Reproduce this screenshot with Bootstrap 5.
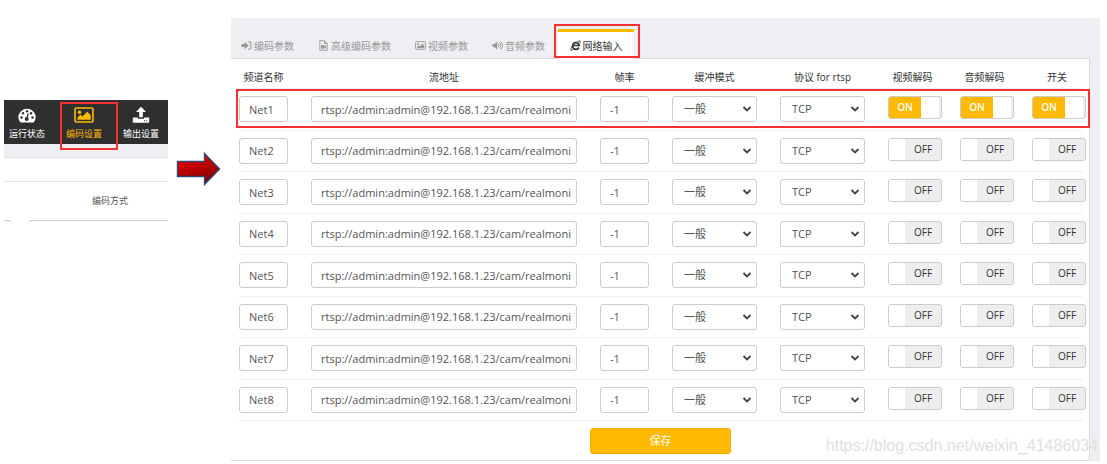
<!DOCTYPE html>
<html lang="zh-CN">
<head>
<meta charset="utf-8">
<meta name="viewport" content="width=device-width, initial-scale=1">
<title>编码设置 - 网络输入</title>
<link href="https://cdn.jsdelivr.net/npm/bootstrap@5.3.0/dist/css/bootstrap.min.css" rel="stylesheet">
<style>
:root { --amber: #ffb900; --mist: #eeeef3; --mark: #f73131; }
body { font-family: "Open Sans", "Noto Sans CJK SC", sans-serif; font-size: 11px; line-height: 16px; color: #555; background: #fff; }

/* red call-out frames laid over the screens */
.callout { position: relative; }
.callout::after { content: ""; position: absolute; border: 2px solid var(--mark); pointer-events: none; z-index: 2; }

/* left: cropped top navigation */
.crop { width: 164px; margin-top: 100px; font-size: 9px; line-height: 12px; }
.topnav { background: #2f2f2f; height: 44px; }
.topnav a { width: 46px; padding-top: 6px; color: #fff; }
.topnav a.active { width: 68px; color: var(--amber); }
.topnav svg { width: 20px; height: 18px; margin-bottom: 4px; }
.topnav .callout::after { inset: 2px 0 -6px 10px; }
.crop .band { height: 14px; background: var(--mist); border-bottom: 1px solid #e2e2e4; }
.crop .blank { height: 24px; border-bottom: 1px solid #e2e2e4; }
.crop .caption { padding: 13px 0 13px 48px; }
.stubs { gap: 18px; }
.stub { height: 2px; border: 1px solid #ccc; border-bottom: 0; }
.stub-a { width: 7px; border-left: 0; border-top-right-radius: 2px; }
.stub-b { border-right: 0; border-top-left-radius: 2px; }
.pointer { width: 45px; height: 36px; margin: 151px 10px 0 8px; }

/* right: settings panel */
.panel { background: var(--mist); margin: 18px 7px 0 0; padding-right: 10px; min-width: 0; }
.tabs { height: 40px; padding: 11px 0 0 10px; gap: 24px; font-size: 10px; }
.tabs a { color: #999; height: 30px; padding-top: 3px; gap: 2px; }
.tabs a.active { color: #333; background: #fff; border-top: 3px solid var(--amber); padding-top: 0; width: 76px; margin-left: -11px; }
.tabs svg { width: 11px; height: 11px; }
.tabs .callout::after { inset: -8px -6px 1px -4px; }
.sheet { background: #fff; border: 1px solid #dcdcde; border-left: 0; border-radius: 0 0 3px 0; padding: 0 7px 6px 8px; }

.grid { width: 100%; height: 362px; table-layout: fixed; border-collapse: separate; border-spacing: 0; }
.grid th, .grid td { padding: 0 11px 0 12px; border-bottom: 1px solid #eee; }
.grid th { height: 30px; padding-top: 6px; font-size: 10px; font-weight: 400; color: #333; text-align: center; white-space: nowrap; }
.grid td { padding-top: 7px; vertical-align: top; }
.grid th:first-child, .grid td:first-child { padding-left: 0; }
.grid th:last-child, .grid td:last-child { padding-right: 0; }
.w-name { width: 60px; } .w-std { width: 72px; } .w-pick { width: 108px; } .w-end { width: 62px; }
.first-row::after { top: 30px; height: 39px; left: -3px; right: -8px; }

.grid .form-control, .grid .form-select { height: 26px; padding: 0 9px; font-size: 11px; line-height: 16px; color: #555; border: 1px solid #ccc; border-radius: 3px; }
.grid .url { padding-right: 0; }
.grid .form-select { padding: 0 20px 0 11px; background-size: 10px 8px; background-position: right 4px center;
  background-image: url("data:image/svg+xml,%3Csvg xmlns='http://www.w3.org/2000/svg' viewBox='0 0 10 8'%3E%3Cpath d='M1.5 2l3.5 3.5L8.500 2' fill='none' stroke='%23444' stroke-width='1.800'/%3E%3C/svg%3E"); }

.toggle { display: flex; width: 54px; height: 23px; border: 1px solid #ccc; border-radius: 3px; overflow: hidden; font-size: 10px; line-height: 21px; background: #eee; color: #333; cursor: pointer; }
.toggle .on { display: none; width: 32px; background: var(--amber); color: #fff; font-weight: 600; text-align: center; }
.toggle .knob { width: 16px; background: #fff; }
.toggle .off { flex: 1; text-align: center; }
.toggle input:checked ~ .on { display: block; }
.toggle input:checked ~ .knob { width: 18px; }
.toggle input:checked ~ .off { display: none; }

.save { width: 141px; height: 26px; margin-top: 7px; padding: 0; font-size: 11px; line-height: 16px; color: #fff; background: var(--amber); border: 1px solid #f0ae00; border-radius: 3px; }
.save:hover { color: #fff; background: #f0ae00; }
.watermark { position: absolute; right: 9px; top: 436px; font: 16px/20px "Liberation Sans", sans-serif; color: #e0e0e0; z-index: 3; pointer-events: none; }
</style>
</head>
<body>
<svg class="d-none" xmlns="http://www.w3.org/2000/svg">
  <symbol id="i-gauge" viewBox="0 0 20 18"><path fill="currentColor" d="M3.500 16.500A8.700 8.200 0 1 1 16.500 16.500z"/><g fill="#2f2f2f"><circle cx="4.500" cy="11.500" r="1.200"/><circle cx="6" cy="7.300" r="1.200"/><circle cx="10" cy="5.300" r="1.200"/><circle cx="14" cy="7.300" r="1.200"/><circle cx="15.500" cy="11.500" r="1.200"/><circle cx="9.700" cy="13" r="2"/></g><path d="M9.700 13l1.500-5.500" stroke="#2f2f2f" stroke-width="1.200"/></symbol>
  <symbol id="i-image" viewBox="0 0 20 18"><rect x="1" y="2" width="18" height="14" rx="1.500" fill="none" stroke="currentColor" stroke-width="1.600"/><circle cx="5.500" cy="6.300" r="1.700" fill="currentColor"/><path fill="currentColor" d="M3.500 13.800v-2.300l3-3 2 2 4.700-4.800 3.500 3.500v4.600z"/></symbol>
  <symbol id="i-upload" viewBox="0 0 20 18"><path fill="currentColor" d="M10 .8l5 5.200h-3.200v5.200H8.200V6H5zM2.500 11.500h4.300v1.300h6.400v-1.300h4.300q.7 0 .7.700v3.800q0 .7-.7.700h-15q-.7 0-.7-.7v-3.800q0-.7.7-.7z"/><path fill="#2f2f2f" d="M13 14.300h1v1h-1zM15.300 14.300h1v1h-1z"/></symbol>
  <symbol id="i-signin" viewBox="0 0 12 12"><path fill="currentColor" d="M.5 4.300h3.500V1.800L8.500 6 4 10.200V7.700H.5z"/><path d="M8 2h1.500q1.300 0 1.300 1.300v5.400q0 1.300-1.300 1.300H8" fill="none" stroke="currentColor" stroke-width="1.200"/></symbol>
  <symbol id="i-film" viewBox="0 0 12 12"><path d="M2 .8h5l3 3v7.400H2zM7 .8v3h3" fill="none" stroke="currentColor"/><path fill="currentColor" d="M3.300 5.500h3.400v1.300l2-1.300v4l-2-1.300v1.300H3.300z"/></symbol>
  <symbol id="i-speaker" viewBox="0 0 12 12"><path fill="currentColor" d="M.5 4.300h2L5.700 1.500v9L2.500 7.700h-2z"/><path d="M7 4.300q1.500 1.700 0 3.400M8.300 2.900q2.800 3.100 0 6.200M9.600 1.600q4 4.400 0 8.800" fill="none" stroke="currentColor"/></symbol>
  <symbol id="i-browser" viewBox="0 0 12 12"><path d="M9.800 8.200A3.700 3.700 0 1 1 10.200 6H4" fill="none" stroke="currentColor" stroke-width="1.900"/><path d="M8 2q3-1.800 3.300-.7.200.8-.6 2.200M2.500 6.500Q.1 10.500 1 11.200q.8.600 3-1" fill="none" stroke="currentColor" stroke-width=".9"/></symbol>
</svg>

<div class="d-flex align-items-start ps-1">
  <aside class="crop flex-shrink-0">
    <nav class="topnav d-flex">
      <a href="#" class="d-flex flex-column align-items-center text-decoration-none"><svg><use href="#i-gauge"/></svg>运行状态</a>
      <a href="#" class="active callout d-flex flex-column align-items-center text-decoration-none"><svg><use href="#i-image"/></svg>编码设置</a>
      <a href="#" class="d-flex flex-column align-items-center text-decoration-none"><svg><use href="#i-upload"/></svg>输出设置</a>
    </nav>
    <div class="band"></div>
    <div class="blank"></div>
    <div class="caption text-center">编码方式</div>
    <div class="stubs d-flex"><div class="stub stub-a"></div><div class="stub stub-b flex-grow-1"></div></div>
  </aside>

  <svg class="pointer flex-shrink-0" viewBox="0 0 45 36">
    <defs><linearGradient id="red" x1="0" y1="0" x2="0.4" y2="1"><stop offset="0.200" stop-color="#e60000"/><stop offset="1" stop-color="#850000"/></linearGradient></defs>
    <path d="M1.500 10.500h27v-8L43.500 18l-15 15.500v-8h-27z" fill="url(#red)" stroke="#2f4a78" stroke-width="1.400"/>
  </svg>

  <main class="panel flex-grow-1">
    <nav class="tabs d-flex">
      <a href="#" class="d-flex align-items-center text-decoration-none"><svg><use href="#i-signin"/></svg>编码参数</a>
      <a href="#" class="d-flex align-items-center text-decoration-none"><svg><use href="#i-film"/></svg>高级编码参数</a>
      <a href="#" class="d-flex align-items-center text-decoration-none"><svg><use href="#i-image"/></svg>视频参数</a>
      <a href="#" class="d-flex align-items-center text-decoration-none"><svg><use href="#i-speaker"/></svg>音频参数</a>
      <a href="#" class="active callout d-flex align-items-center justify-content-center text-decoration-none"><svg><use href="#i-browser"/></svg>网络输入</a>
    </nav>
    <form class="sheet" onsubmit="return false">
      <div class="callout first-row">
        <table class="grid">
          <colgroup><col class="w-name"><col><col class="w-std"><col class="w-pick"><col class="w-pick"><col class="w-std"><col class="w-std"><col class="w-end"></colgroup>
          <thead><tr><th>频道名称</th><th>流地址</th><th>帧率</th><th>缓冲模式</th><th>协议 for rtsp</th><th>视频解码</th><th>音频解码</th><th>开关</th></tr></thead>
          <tbody id="channels"></tbody>
        </table>
      </div>
      <div class="text-center"><button type="submit" class="btn save">保存</button></div>
    </form>
  </main>
</div>
<div class="watermark">https://blog.csdn.net/weixin_41486034</div>

<script src="https://cdn.jsdelivr.net/npm/bootstrap@5.3.0/dist/js/bootstrap.bundle.min.js"></script>
<script>
const toggle = (label, on) => `<td><label class="toggle"><input type="checkbox" class="visually-hidden" aria-label="${label}"${on ? ' checked' : ''}><span class="on">ON</span><span class="knob"></span><span class="off">OFF</span></label></td>`;
const rows = [];
for (let n = 1; n <= 8; n++) {
  const on = n === 1;
  rows.push(`<tr>
    <td><input class="form-control" aria-label="频道名称" value="Net${n}"></td>
    <td><input class="form-control url" aria-label="流地址" value="rtsp://admin:admin@192.168.1.23/cam/realmoni"></td>
    <td><input class="form-control" aria-label="帧率" value="-1"></td>
    <td><select class="form-select" aria-label="缓冲模式"><option>一般</option></select></td>
    <td><select class="form-select" aria-label="协议"><option>TCP</option></select></td>
    ${toggle('视频解码', on)}${toggle('音频解码', on)}${toggle('开关', on)}</tr>`);
}
document.getElementById('channels').innerHTML = rows.join('');
</script>
</body>
</html>
